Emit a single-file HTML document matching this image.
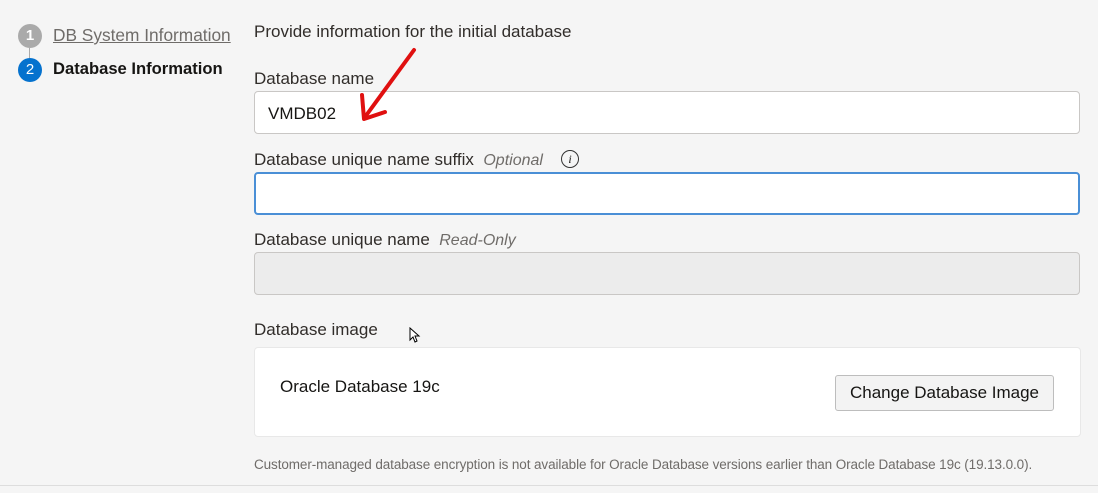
<!DOCTYPE html>
<html><head><meta charset="utf-8"><style>
body{margin:0;width:1098px;height:493px;background:#f5f5f5;font-family:"Liberation Sans",sans-serif;color:#161513;position:relative;overflow:hidden}
.a{position:absolute}
.lbl{font-size:17px;color:#312d2a}
.box{position:absolute;left:254px;width:826px;border:1px solid #c9c7c5;border-radius:4px;background:#fff;box-sizing:border-box}
</style></head><body>
<div class="a" style="left:18px;top:24px;width:24px;height:24px;border-radius:50%;background:#aaa;color:#fff;font-size:15px;text-align:center;line-height:24px;font-weight:bold">1</div>
<div class="a" style="left:29px;top:48px;width:1px;height:10px;background:#aaa"></div>
<div class="a" style="left:18px;top:58px;width:24px;height:24px;border-radius:50%;background:#0572ce;color:#fff;font-size:15px;text-align:center;line-height:24px">2</div>
<div class="a" style="left:53px;top:25px;font-size:17.3px;color:#6f6c69;text-decoration:underline">DB System Information</div>
<div class="a" style="left:53px;top:59px;font-size:16.6px;font-weight:bold">Database Information</div>
<div class="a lbl" style="left:254px;top:22px">Provide information for the initial database</div>
<div class="a lbl" style="left:254px;top:69px">Database name</div>
<div class="box" style="top:91px;height:43px"><span class="a" style="left:13px;top:12px;font-size:17px">VMDB02</span></div>
<div class="a lbl" style="left:254px;top:150px">Database unique name suffix&nbsp;&nbsp;<i style="color:#6f6c69;font-size:16px">Optional</i></div>
<div class="a" style="left:561px;top:150px;width:16px;height:16px;border:1.5px solid #333;border-radius:50%;font-size:12px;text-align:center;line-height:16px;font-style:italic;font-family:'Liberation Serif',serif">i</div>
<div class="box" style="top:172px;height:43px;border:2px solid #4a8fd6"></div>
<div class="a lbl" style="left:254px;top:230px">Database unique name&nbsp;&nbsp;<i style="color:#6f6c69;font-size:16px">Read-Only</i></div>
<div class="box" style="top:252px;height:43px;background:#ececec"></div>
<div class="a lbl" style="left:254px;top:320px">Database image</div>
<div class="a" style="left:254px;top:347px;width:827px;height:90px;background:#fff;border:1px solid #e8e8e8;border-radius:4px;box-sizing:border-box"></div>
<div class="a lbl" style="left:280px;top:377px;color:#161513">Oracle Database 19c</div>
<div class="a" style="left:835px;top:375px;width:219px;height:36px;border:1px solid #bdbdbd;border-radius:3px;background:#f3f3f3;box-sizing:border-box;font-size:17px;text-align:center;line-height:34px">Change Database Image</div>
<div class="a" style="left:254px;top:457px;font-size:13.5px;color:#6f6c69;letter-spacing:-0.1px">Customer-managed database encryption is not available for Oracle Database versions earlier than Oracle Database 19c (19.13.0.0).</div>
<div class="a" style="left:0;top:485px;width:1098px;height:1px;background:#ddd"></div>
<svg class="a" style="left:355px;top:45px" width="70" height="80"><path d="M59 5 L10 72 M7 50 L9 74 L30 67" stroke="#e01010" stroke-width="4" fill="none" stroke-linecap="round" stroke-linejoin="round"/></svg>
<svg class="a" style="left:409px;top:327px" width="12" height="18"><path d="M1 1 L1 13 L4 10 L6 15 L8 14 L6 9 L10 9 Z" fill="#fff" stroke="#000" stroke-width="1"/></svg>
</body></html>
